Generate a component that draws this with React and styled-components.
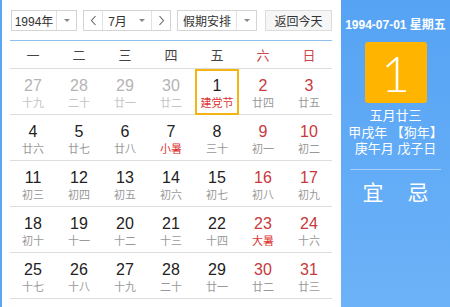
import React from 'react';
import styled, { createGlobalStyle } from 'styled-components';

const GlobalStyle = createGlobalStyle`
    body {
        margin: 0;
        font-family: "Liberation Sans", "Noto Sans CJK SC", sans-serif;
        background: #fff;
    }
`;

const Calendar = styled.div`
    display: flex;
    width: 450px;
    height: 307px;
    box-sizing: border-box;
    border-left: 2px solid #5aa5f4;
    overflow: hidden;
`;

const MainPanel = styled.div`
    width: 339px;
    box-sizing: border-box;
    padding: 10px 9px 0 8px;
`;

const Toolbar = styled.div`
    display: flex;
    gap: 6px;
    padding-left: 1px;
    height: 21px;
    padding-bottom: 9px;
    border-bottom: 1px solid #8fc1ee;
`;

const SelectBox = styled.div`
    display: flex;
    width: ${(p) => p.$w}px;
    height: 21px;
    box-sizing: border-box;
    border: 1px solid #d4d4d4;
    background: #fff;
    font-size: 12px;
    color: #333;
    margin-right: ${(p) => p.$mr || 0}px;
`;

const SelectText = styled.div`
    flex: 1;
    display: flex;
    align-items: center;
    justify-content: center;
`;

const Caret = styled.div`
    width: 19px;
    display: flex;
    align-items: center;
    justify-content: center;
    border-left: ${(p) => (p.$noline ? 'none' : '1px solid #e2e2e2')};

    &::after {
        content: '';
        border-left: 3px solid transparent;
        border-right: 3px solid transparent;
        border-top: 3px solid #888;
    }
`;

const Arrow = styled.div`
    width: 18px;
    display: flex;
    align-items: center;
    justify-content: center;
    border-${(p) => p.$side}: 1px solid #e2e2e2;
`;

const TodayButton = styled.div`
    width: 67px;
    height: 21px;
    box-sizing: border-box;
    border: 1px solid #dcdcdc;
    background: #f6f6f6;
    font-size: 12px;
    color: #333;
    display: flex;
    align-items: center;
    justify-content: center;
`;

const WeekHeader = styled.div`
    display: grid;
    grid-template-columns: repeat(7, 46px);
    height: 27px;
    border-bottom: 1px solid #ddd;
`;

const WeekName = styled.div`
    display: flex;
    align-items: center;
    justify-content: center;
    font-size: 13px;
    color: ${(p) => (p.$weekend ? '#c8484a' : '#444')};
`;

const DayGrid = styled.div`
    display: grid;
    grid-template-columns: repeat(7, 46px);
`;

const DayCell = styled.div`
    height: 46px;
    box-sizing: border-box;
    border-bottom: 1px solid #ddd;
    display: flex;
    flex-direction: column;
    align-items: center;
    padding-top: 8px;
    position: relative;

    ${(p) => p.$selected && `
        &::after {
            content: '';
            position: absolute;
            left: 1px;
            right: 1px;
            top: 0;
            bottom: -1px;
            border: 2px solid #f3b416;
        }
    `}
`;

const DayNum = styled.div`
    font-size: 16px;
    line-height: 18px;
    color: ${(p) => (p.$other ? '#b4b4b4' : p.$weekend ? '#c8383c' : '#222')};
`;

const Lunar = styled.div`
    font-size: 11px;
    line-height: 16px;
    color: ${(p) => (p.$other ? '#c4c4c4' : p.$festival ? '#d33' : '#999')};
`;

const SidePanel = styled.div`
    flex: 1;
    background: linear-gradient(180deg, #56a3f4 0%, #6cb2f8 100%);
    color: #fff;
    display: flex;
    flex-direction: column;
    align-items: center;
`;

const SideDate = styled.div`
    font-size: 12px;
    font-weight: bold;
    margin-top: 15px;
    height: 14px;
`;

const BigDay = styled.div`
    width: 62px;
    height: 61px;
    margin-top: 13px;
    background: #ffb500;
    border-radius: 3px;
    display: flex;
    align-items: center;
    justify-content: center;
    font-size: 50px;
    font-family: "Lato", "Liberation Sans", sans-serif;
    font-weight: 300;
`;

const LunarInfo = styled.div`
    margin-top: 5px;
    font-size: 13px;
    line-height: 16.5px;
    text-align: center;
`;

const Divider = styled.div`
    width: 91px;
    height: 1px;
    background: rgba(255, 255, 255, 0.45);
    margin-top: 11px;
`;

const GoodBad = styled.div`
    display: flex;
    gap: 24px;
    margin-top: 11px;
    font-size: 21px;
    line-height: 24px;
`;

const Chevron = ({ dir }) => (
    <svg width='7' height='11' viewBox='0 0 7 11'>
        <path
            d={dir === 'left' ? 'M5.5 1 L1.5 5.5 L5.5 10' : 'M1.5 1 L5.5 5.5 L1.5 10'}
            fill='none'
            stroke='#666'
            strokeWidth='1.1'
        />
    </svg>
);

const weekNames = ['一', '二', '三', '四', '五', '六', '日'];

const days = [
    { n: 27, l: '十九', other: true }, { n: 28, l: '二十', other: true }, { n: 29, l: '廿一', other: true },
    { n: 30, l: '廿二', other: true }, { n: 1, l: '建党节', festival: true, selected: true }, { n: 2, l: '廿四' }, { n: 3, l: '廿五' },
    { n: 4, l: '廿六' }, { n: 5, l: '廿七' }, { n: 6, l: '廿八' }, { n: 7, l: '小暑', festival: true },
    { n: 8, l: '三十' }, { n: 9, l: '初一' }, { n: 10, l: '初二' },
    { n: 11, l: '初三' }, { n: 12, l: '初四' }, { n: 13, l: '初五' }, { n: 14, l: '初六' },
    { n: 15, l: '初七' }, { n: 16, l: '初八' }, { n: 17, l: '初九' },
    { n: 18, l: '初十' }, { n: 19, l: '十一' }, { n: 20, l: '十二' }, { n: 21, l: '十三' },
    { n: 22, l: '十四' }, { n: 23, l: '大暑', festival: true }, { n: 24, l: '十六' },
    { n: 25, l: '十七' }, { n: 26, l: '十八' }, { n: 27, l: '十九' }, { n: 28, l: '二十' },
    { n: 29, l: '廿一' }, { n: 30, l: '廿二' }, { n: 31, l: '廿三' },
];

function App() {
    return (
        <>
            <GlobalStyle />
            <Calendar>
                <MainPanel>
                    <Toolbar>
                        <SelectBox $w={66}>
                            <SelectText>1994年</SelectText>
                            <Caret />
                        </SelectBox>
                        <SelectBox $w={88}>
                            <Arrow $side='right'><Chevron dir='left' /></Arrow>
                            <SelectText>7月</SelectText>
                            <Caret $noline />
                            <Arrow $side='left'><Chevron dir='right' /></Arrow>
                        </SelectBox>
                        <SelectBox $w={80} $mr={2}>
                            <SelectText>假期安排</SelectText>
                            <Caret />
                        </SelectBox>
                        <TodayButton>返回今天</TodayButton>
                    </Toolbar>
                    <WeekHeader>
                        {weekNames.map((w, i) => (
                            <WeekName key={w} $weekend={i > 4}>{w}</WeekName>
                        ))}
                    </WeekHeader>
                    <DayGrid>
                        {days.map((d, i) => {
                            const weekend = i % 7 > 4;
                            return (
                                <DayCell key={i} $selected={d.selected}>
                                    <DayNum $other={d.other} $weekend={weekend}>{d.n}</DayNum>
                                    <Lunar $other={d.other} $festival={d.festival}>{d.l}</Lunar>
                                </DayCell>
                            );
                        })}
                    </DayGrid>
                </MainPanel>
                <SidePanel>
                    <SideDate>1994-07-01 星期五</SideDate>
                    <BigDay>1</BigDay>
                    <LunarInfo>
                        五月廿三<br />
                        甲戌年 【狗年】<br />
                        庚午月 戊子日
                    </LunarInfo>
                    <Divider />
                    <GoodBad>
                        <span>宜</span>
                        <span>忌</span>
                    </GoodBad>
                </SidePanel>
            </Calendar>
        </>
    );
}

export default App;
